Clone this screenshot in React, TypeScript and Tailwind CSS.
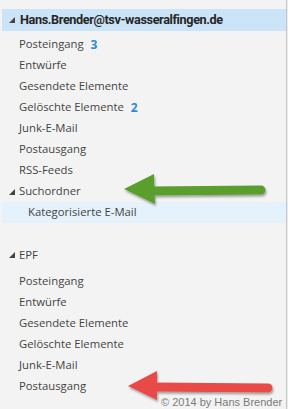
import React from "react";

const font = { fontFamily: '"Open Sans", "Noto Sans", sans-serif' };

function Tri() {
  return (
    <svg width="6" height="6" viewBox="0 0 6 6" className="shrink-0">
      <polygon points="6,0 6,6 0,6" fill="#444" />
    </svg>
  );
}

function Item({ label, count, selected, indent }: { label: string; count?: number; selected?: boolean; indent?: boolean }) {
  return (
    <div
      className={`h-[21px] flex items-center text-[11.3px] text-[#444] whitespace-nowrap ${indent ? "pl-[26px]" : "pl-[17px]"} ${selected ? "bg-[#e5f1fb]" : ""}`}
    >
      <span>{label}</span>
      {count !== undefined && <span className="ml-[7px] text-[12px] font-bold text-[#2a8ad4]">{count}</span>}
    </div>
  );
}

function Group({ label }: { label: string }) {
  return (
    <div className="h-[21px] flex items-center gap-[4px] pl-[7px] text-[11.3px] text-[#444]">
      <Tri />
      <span>{label}</span>
    </div>
  );
}

export default function App() {
  return (
    <div className="relative w-[288px] h-[409px] flex bg-[#f3f3f3] overflow-hidden" style={font}>
      <div className="w-[286px] pl-[2px] pt-[9px] flex flex-col">
        <div className="h-[22px] bg-[#cce4f7] flex items-center gap-[5px] pl-[7px]">
          <Tri />
          <span
            className="text-[12.7px] font-bold text-[#262626] leading-none whitespace-nowrap tracking-[-0.4px]"
            style={{ fontFamily: 'Roboto, "Open Sans", sans-serif' }}
          >
            Hans.Brender@tsv-wasseralfingen.de
          </span>
        </div>
        <div className="h-[3px]" />
        <Item label="Posteingang" count={3} />
        <Item label="Entwürfe" />
        <Item label="Gesendete Elemente" />
        <Item label="Gelöschte Elemente" count={2} />
        <Item label="Junk-E-Mail" />
        <Item label="Postausgang" />
        <Item label="RSS-Feeds" />
        <Group label="Suchordner" />
        <Item label="Kategorisierte E-Mail" selected indent />
        <div className="h-[21px]" />
        <div className="h-[22px] flex items-center gap-[4px] pl-[7px] text-[11.3px] text-[#444]">
          <Tri />
          <span>EPF</span>
        </div>
        <div className="h-[5px]" />
        <Item label="Posteingang" />
        <Item label="Entwürfe" />
        <Item label="Gesendete Elemente" />
        <Item label="Gelöschte Elemente" />
        <Item label="Junk-E-Mail" />
        <Item label="Postausgang" />
      </div>
      <div className="w-[1px] bg-[#c6c6c6]" />
      <div className="w-[1px] bg-[#ececec]" />

      <svg className="absolute left-0 top-0 pointer-events-none" width="288" height="409" viewBox="0 0 288 409">
        <defs>
          <filter id="sh" x="-10%" y="-30%" width="120%" height="160%">
            <feDropShadow dx="1" dy="2" stdDeviation="1.2" floodColor="#000" floodOpacity="0.35" />
          </filter>
        </defs>
        <g filter="url(#sh)" fill="#5a9f2d" stroke="#5a9f2d">
          <line x1="150" y1="191" x2="261" y2="190" strokeWidth="9" strokeLinecap="round" />
          <polygon points="124,189 154,174 155,204" stroke="none" />
        </g>
        <g filter="url(#sh)" fill="#e84b47" stroke="#e84b47">
          <line x1="154" y1="387" x2="268" y2="388" strokeWidth="9" strokeLinecap="round" />
          <polygon points="128,386 157,371 157,400" stroke="none" />
        </g>
      </svg>
      <div
        className="absolute left-[161px] top-[396px] text-[11px] leading-[13px] text-[#7a7a7a] whitespace-nowrap"
        style={{ fontFamily: '"Liberation Sans", Arial, sans-serif' }}
      >
        © 2014 by Hans Brender
      </div>
    </div>
  );
}
